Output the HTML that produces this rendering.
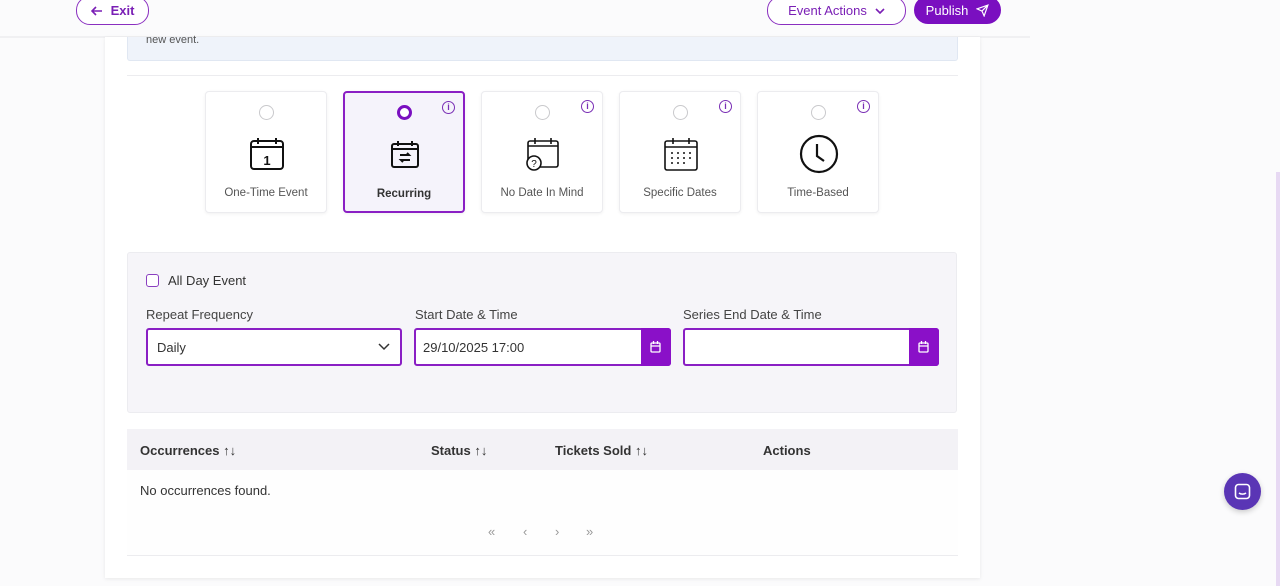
<!DOCTYPE html>
<html><head><style>
*{box-sizing:border-box;margin:0;padding:0}
body{width:1280px;height:586px;overflow:hidden;background:#fbfbfc;font-family:"Liberation Sans",sans-serif;position:relative;color:#222}
.abs{position:absolute}
.btn{position:absolute;border:1px solid #8a2fc0;border-radius:14px;color:#7a1fb5;font-size:13px;display:flex;align-items:center;justify-content:center;gap:8px;background:#fff}
.card{position:absolute;top:91px;width:122px;height:122px;background:#fff;border:1px solid #ececef;border-radius:4px;box-shadow:0 1px 3px rgba(0,0,0,.06)}
.card .r{position:absolute;left:53px;top:13px;width:15px;height:15px;border:1.5px solid #c9c9cc;border-radius:50%}
.card .i{position:absolute;right:8px;top:8px;width:13px;height:13px;border:1.3px solid #7a2fb5;border-radius:50%;font-size:9px;color:#7a2fb5;text-align:center;line-height:10px;font-weight:bold}
.card .t{position:absolute;left:0;right:0;top:95px;text-align:center;font-size:11.5px;color:#555}
.card svg{position:absolute;left:43px;top:44px}
.lbl{position:absolute;font-size:13px;color:#444}
.inp{position:absolute;top:328px;height:38px;border:2px solid #8a1fc4;border-radius:3px;background:#fff;font-size:13px;color:#333;padding:0 9px;display:flex;align-items:center}
.cal{position:absolute;right:-2px;top:-2px;width:30px;height:38px;background:#8a10c8;border-radius:0 3px 3px 0}
.th{position:absolute;top:443px;font-size:13px;font-weight:bold;color:#333}
.pg{position:absolute;top:524px;font-size:13px;color:#999}
</style></head><body>
<div class="abs" style="left:0;top:36px;width:1030px;height:2px;background:#f0f0f2"></div>
<div class="abs" style="left:105px;top:37px;width:875px;height:541px;background:#fff;box-shadow:0 1px 4px rgba(0,0,0,.08)"></div>
<div class="abs" style="left:127px;top:37px;width:831px;height:24px;background:#eff3fa;border:1px solid #e0e7f2;border-top:none;border-radius:0 0 3px 3px"></div>
<div class="abs" style="left:146px;top:34px;font-size:11px;color:#555">new event.</div>
<div class="abs" style="left:127px;top:75px;width:831px;height:1px;background:#ececef"></div>

<div class="btn" style="left:76px;top:-4px;width:73px;height:29px;font-weight:bold"><svg width="12" height="10" viewBox="0 0 12 10" fill="none" stroke="#7a1fb5" stroke-width="1.6"><path d="M11 5H1M5 1L1 5l4 4"/></svg>Exit</div>
<div class="btn" style="left:767px;top:-4px;width:139px;height:29px">Event Actions <svg width="10" height="6" viewBox="0 0 10 6" fill="none" stroke="#7a1fb5" stroke-width="1.6"><path d="M1 1l4 4 4-4"/></svg></div>
<div class="btn" style="left:914px;top:-4px;width:87px;height:28px;background:#7a0fc0;color:#fff;border-color:#7a0fc0">Publish <svg width="13" height="13" viewBox="0 0 24 24" fill="none" stroke="#fff" stroke-width="2.2"><path d="M22 2L11 13M22 2l-7 20-4-9-9-4z"/></svg></div>

<div class="card" style="left:205px"><div class="r"></div>
<svg width="36" height="36" viewBox="0 0 36 36" fill="none" stroke="#111" stroke-width="2"><rect x="2" y="5" width="32" height="28" rx="3"/><path d="M2 11h32M9 2v6M27 2v6"/><text x="18" y="29" font-size="13" text-anchor="middle" fill="#111" stroke="none" font-weight="bold">1</text></svg>
<div class="t">One-Time Event</div></div>
<div class="card" style="left:343px;border:2px solid #8a1fc4;background:#f5f3fb"><div class="r" style="left:52px;top:12px;border:3.5px solid #7a0fc0;background:#fff"></div><div class="i">i</div>
<svg width="30" height="30" viewBox="0 0 30 30" fill="none" stroke="#111" stroke-width="2" style="left:45px;top:46px"><rect x="2" y="5" width="26" height="23" rx="2"/><path d="M2 10h26M8 2v5M22 2v5M10 16h9l-2-2M20 21h-9l2 2"/></svg>
<div class="t" style="top:95px;font-weight:bold;color:#333">Recurring</div></div>
<div class="card" style="left:481px"><div class="r"></div><div class="i">i</div>
<svg width="36" height="36" viewBox="0 0 36 36" fill="none" stroke="#111" stroke-width="1.6"><rect x="3" y="5" width="30" height="26" rx="2"/><path d="M3 10h30M10 2v6M26 2v6"/><circle cx="9" cy="27" r="7" fill="#fff"/><text x="9" y="31" font-size="10" text-anchor="middle" fill="#111" stroke="none">?</text></svg>
<div class="t">No Date In Mind</div></div>
<div class="card" style="left:619px"><div class="r"></div><div class="i">i</div>
<svg width="36" height="36" viewBox="0 0 36 36" fill="none" stroke="#111" stroke-width="1.6"><rect x="2" y="5" width="32" height="29" rx="2"/><path d="M2 11h32M10 2v6M26 2v6M8 17h2M14 17h2M20 17h2M26 17h2M8 22h2M14 22h2M20 22h2M26 22h2M8 27h2M14 27h2M20 27h2"/></svg>
<div class="t">Specific Dates</div></div>
<div class="card" style="left:757px"><div class="r"></div><div class="i">i</div>
<svg width="40" height="40" viewBox="0 0 40 40" fill="none" stroke="#111" stroke-width="2.2" style="left:41px;top:42px"><circle cx="20" cy="20" r="18"/><path d="M18 10v12l7 5"/></svg>
<div class="t">Time-Based</div></div>

<div class="abs" style="left:127px;top:252px;width:830px;height:161px;background:#f6f5f9;border:1px solid #ececf0;border-radius:3px"></div>
<div class="abs" style="left:146px;top:274px;width:13px;height:13px;border:1.5px solid #8a3fc0;border-radius:3px;background:#fff"></div>
<div class="abs" style="left:168px;top:273px;font-size:13px;color:#333">All Day Event</div>
<div class="lbl" style="left:146px;top:307px">Repeat Frequency</div>
<div class="lbl" style="left:415px;top:307px">Start Date &amp; Time</div>
<div class="lbl" style="left:683px;top:307px">Series End Date &amp; Time</div>
<div class="inp" style="left:146px;width:256px">Daily<svg class="abs" style="right:10px;top:13px" width="12" height="8" viewBox="0 0 12 8" fill="none" stroke="#333" stroke-width="1.5"><path d="M1 1l5 5 5-5"/></svg></div>
<div class="inp" style="left:414px;width:257px;padding-left:7px">29/10/2025 17:00<div class="cal"><svg style="margin:13px 0 0 9px" width="11" height="12" viewBox="0 0 11 12" fill="none" stroke="#fff" stroke-width="1.3"><rect x="1" y="2" width="9" height="9" rx="1"/><path d="M1 5h9M3.5 0v3M7.5 0v3"/></svg></div></div>
<div class="inp" style="left:683px;width:256px"><div class="cal"><svg style="margin:13px 0 0 9px" width="11" height="12" viewBox="0 0 11 12" fill="none" stroke="#fff" stroke-width="1.3"><rect x="1" y="2" width="9" height="9" rx="1"/><path d="M1 5h9M3.5 0v3M7.5 0v3"/></svg></div></div>

<div class="abs" style="left:127px;top:429px;width:831px;height:41px;background:#f3f2f6"></div>
<div class="th" style="left:140px">Occurrences <span style="font-weight:normal">↑↓</span></div>
<div class="th" style="left:431px">Status <span style="font-weight:normal">↑↓</span></div>
<div class="th" style="left:555px">Tickets Sold <span style="font-weight:normal">↑↓</span></div>
<div class="th" style="left:763px">Actions</div>
<div class="abs" style="left:127px;top:470px;width:831px;height:86px;background:#fefefe;border-bottom:1px solid #ececef"></div>
<div class="abs" style="left:140px;top:483px;font-size:13px;color:#333">No occurrences found.</div>
<div class="pg" style="left:488px">«</div><div class="pg" style="left:523px">‹</div><div class="pg" style="left:555px">›</div><div class="pg" style="left:586px">»</div>

<div class="abs" style="left:1276px;top:172px;width:4px;height:414px;background:#e7d9f3"></div>
<div class="abs" style="left:1224px;top:473px;width:37px;height:37px;border-radius:50%;background:#5a35b5;box-shadow:0 2px 6px rgba(0,0,0,.2)"><svg style="margin:10px 0 0 10px" width="17" height="17" viewBox="0 0 17 17" fill="none" stroke="#fff" stroke-width="1.6"><rect x="1.5" y="1.5" width="14" height="14" rx="3"/><path d="M5 10c2 1.5 5 1.5 7 0"/></svg></div>
</body></html>
